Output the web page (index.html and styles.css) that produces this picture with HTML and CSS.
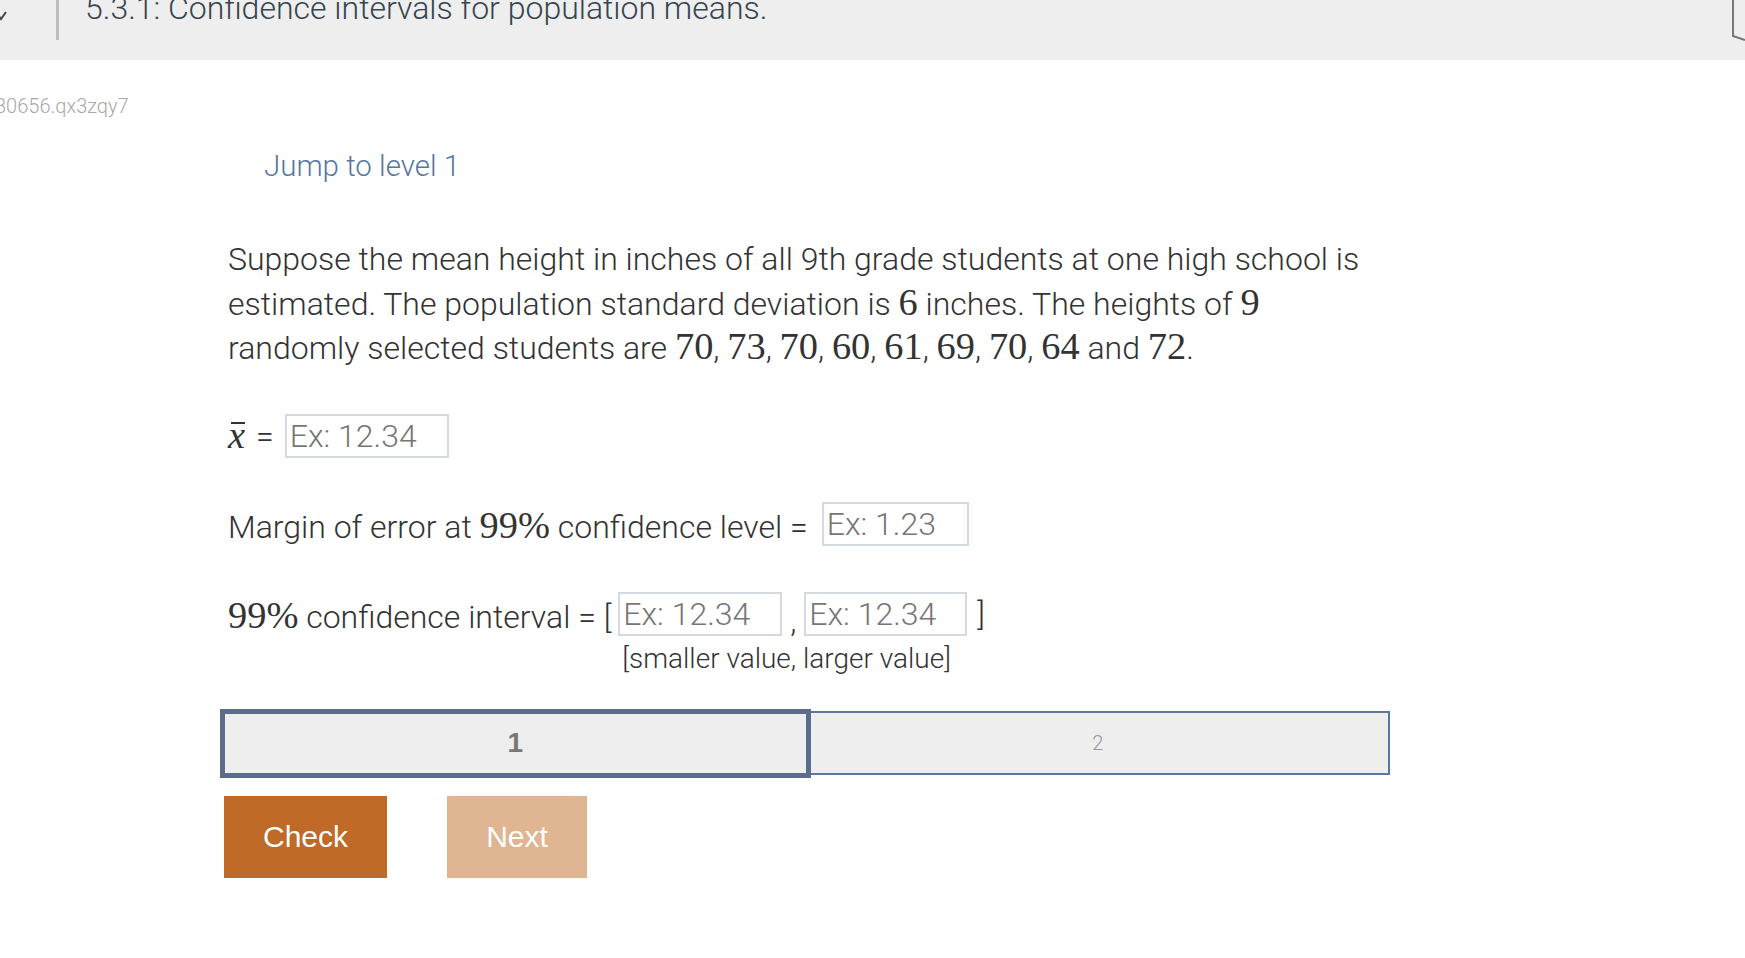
FILE: index.html
```html
<!DOCTYPE html>
<html lang="en">
<head>
<meta charset="utf-8">
<title>5.3.1: Confidence intervals for population means.</title>
<link rel="stylesheet" href="styles.css">
</head>
<body>
<header class="topbar">
  <svg class="chev" width="8" height="30" viewBox="0 0 8 30"><polyline points="-4,12 1,19 6,12" fill="none" stroke="#444" stroke-width="2"/></svg>
  <div class="divider"></div>
  <h1 class="title">5.3.1: Confidence intervals for population means.</h1>
  <svg class="corner" width="14" height="45" viewBox="0 0 14 45"><polyline points="2,0 2,36 14,40" fill="none" stroke="#777" stroke-width="2"/></svg>
</header>
<div class="qid">30656.qx3zqy7</div>
<main class="activity">
  <a class="jump" href="#">Jump to level 1</a>
  <p class="prompt">Suppose the mean height in inches of all 9th grade students at one high school is estimated. The population standard deviation is <span class="m">6</span> inches. The heights of <span class="m">9</span> randomly selected students are <span class="m">70</span>, <span class="m">73</span>, <span class="m">70</span>, <span class="m">60</span>, <span class="m">61</span>, <span class="m">69</span>, <span class="m">70</span>, <span class="m">64</span> and <span class="m">72</span>.</p>

  <div class="row row-mean">
    <span class="m xbar">x</span><span class="eq">=</span>
    <input class="ans" type="text" placeholder="Ex: 12.34">
  </div>

  <div class="row row-moe">
    <span class="lbl">Margin of error at <span class="m">99%</span> confidence level =</span>
    <input class="ans ans-short" type="text" placeholder="Ex: 1.23">
  </div>

  <div class="ci">
    <span class="lbl ci-lbl"><span class="m">99%</span> confidence interval = [</span>
    <div class="ci-col">
      <div class="ci-inputs">
        <input class="ans" type="text" placeholder="Ex: 12.34">
        <span class="comma">,</span>
        <input class="ans ans-short2" type="text" placeholder="Ex: 12.34">
        <span class="close">]</span>
      </div>
      <div class="hint">[smaller value, larger value]</div>
    </div>
  </div>

  <div class="levels">
    <div class="lvl lvl-active">1</div>
    <div class="lvl lvl-next">2</div>
  </div>

  <div class="actions">
    <button class="btn btn-check">Check</button>
    <button class="btn btn-next">Next</button>
  </div>
</main>
</body>
</html>
```

FILE: styles.css
```css
* { box-sizing: border-box; }
body {
  margin: 0;
  background: #fff;
  color: #333;
  font-family: Roboto, "Liberation Sans", sans-serif;
  overflow: hidden;
}
.topbar {
  position: relative;
  height: 60px;
  background: #eee;
  display: flex;
  align-items: flex-start;
  overflow: hidden;
}
.chev { display: block; flex: none; }
.divider {
  flex: none;
  width: 3px;
  height: 40px;
  margin-left: 48px;
  background: #bdbdbd;
}
.title {
  margin: -12px 0 0 26px;
  font-size: 32px;
  line-height: 40px;
  font-weight: 300;
  color: #36454f;
  white-space: nowrap;
}
.corner { position: absolute; right: 0; top: 0; }

.qid {
  margin: 34px 0 0 -5px;
  font-size: 20px;
  line-height: 24px;
  font-weight: 300;
  color: #a8a8a8;
}

.activity { margin-left: 220px; width: 1170px; }
.jump {
  display: block;
  margin: 30px 0 0 44px;
  font-size: 29.5px;
  line-height: 36px;
  font-weight: 300;
  color: #56779f;
  text-decoration: none;
}
.prompt {
  margin: 53px 0 0;
  padding: 0 12px 0 8px;
  font-size: 32px;
  line-height: 44.5px;
  font-weight: 300;
  color: #333;
}
.m {
  font-family: "Liberation Serif", "Times New Roman", serif;
  font-size: 1.2em;
  line-height: 0.9;
  font-weight: 400;
}
.xbar { position: relative; font-style: italic; }
.xbar::after {
  content: "";
  position: absolute;
  left: 3px;
  right: 0;
  top: 4px;
  height: 2px;
  background: #333;
}

.row {
  display: flex;
  align-items: center;
  height: 44px;
  padding-left: 8px;
  font-size: 32px;
  font-weight: 300;
}
.row-mean { margin-top: 43px; }
.row-moe { margin-top: 44px; }
.eq { margin: 0 11px 0 11px; }
.lbl { margin-right: 14px; position: relative; top: 3px; }

.ans {
  width: 164px;
  height: 44px;
  border: 2px solid #d4dadf;
  padding: 0 3px;
  font-family: Roboto, "Liberation Sans", sans-serif;
  font-size: 32px;
  font-weight: 300;
  color: #333;
  background: #fff;
  outline: none;
}
.ans::placeholder { color: #767676; opacity: 1; }
.ans-short { width: 147px; }

.ci {
  display: flex;
  align-items: flex-start;
  margin-top: 46px;
  padding-left: 8px;
  font-size: 32px;
  font-weight: 300;
}
.ci-lbl { line-height: 44px; margin-right: 7px; top: 3px; }
.ci-col { display: flex; flex-direction: column; }
.ci-inputs { display: flex; align-items: flex-end; }
.comma { width: 22px; text-align: center; line-height: 30px; }
.ans-short2 { width: 163px; }
.close { margin-left: 10px; align-self: center; }
.hint {
  margin-top: 8px;
  padding-left: 4px;
  font-size: 28px;
  line-height: 30px;
  font-weight: 300;
  color: #333;
}

.levels {
  display: flex;
  align-items: center;
  margin-top: 35px;
  height: 69px;
}
.lvl {
  flex: 1;
  display: flex;
  align-items: center;
  justify-content: center;
  background: #eee;
}
.lvl-active {
  height: 69px;
  border: 5px solid #5c6c8c;
  font-family: "Liberation Sans", Arial, sans-serif;
  font-weight: 700;
  font-size: 28px;
  color: #777;
  position: relative;
  z-index: 1;
}
.lvl-next {
  height: 64px;
  margin-left: -5px;
  border: 2px solid #5a789e;
  font-size: 20px;
  font-weight: 300;
  color: #999;
}

.actions { display: flex; gap: 60px; margin: 18px 0 0 4px; }
.btn {
  height: 82px;
  border: none;
  padding: 0;
  font-family: "Liberation Sans", Arial, sans-serif;
  font-size: 30px;
  color: #fff;
}
.btn-check { width: 163px; background: #bf6a27; }
.btn-next { width: 140px; background: #e0b592; }
```
